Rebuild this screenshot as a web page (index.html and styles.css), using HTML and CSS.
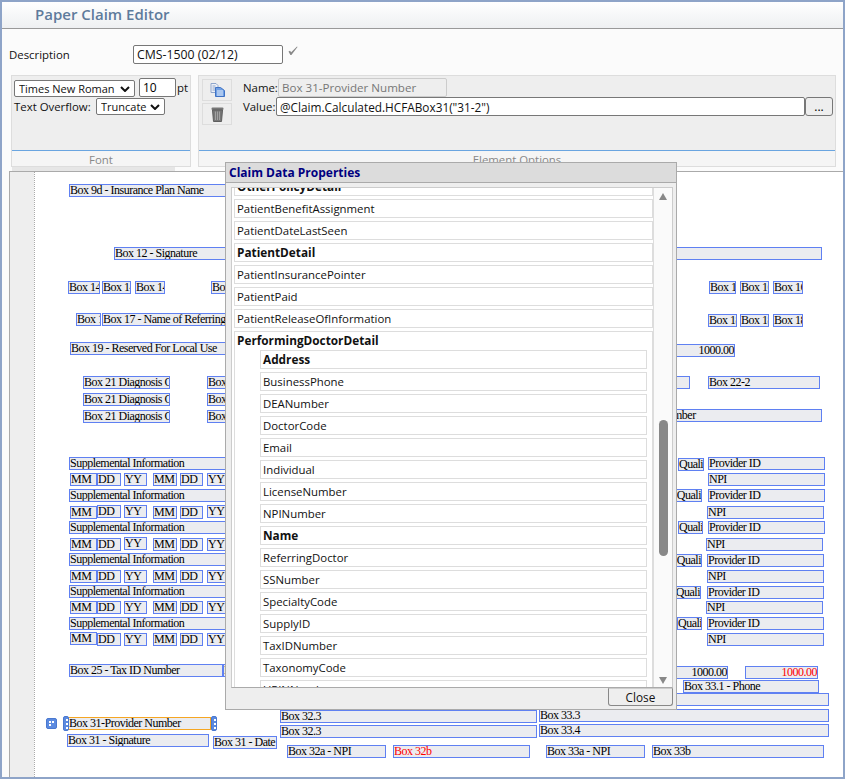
FILE: index.html
```html
<!DOCTYPE html>
<html lang="en">
<head>
	<meta charset="UTF-8">
	<title>Paper Claim Editor</title>
	<link rel="stylesheet" href="styles.css">
</head>
<body>
	<div class="window">
		<div class="head">Paper Claim Editor</div>
		<div class="desc-row">
			<label class="desc-label">Description</label>
			<input class="desc-input" type="text" value="CMS-1500 (02/12)">
			<svg class="check" width="10" height="10" viewBox="0 0 10 10"><path d="M0.5 5.5 L2 4.8 L3.2 6.3 L9 0.5 L9.5 1 L3.4 9 L2.4 9 Z" fill="#888"/></svg>
		</div>
		<div class="ribbon">
			<div class="group group-font">
				<div class="group-body">
					<div class="font-row">
						<select class="sel-font"><option>Times New Roman</option></select>
						<input class="size-input" type="text" value="10">
						<span class="pt">pt</span>
					</div>
					<div class="font-row font-row-2">
						<span class="over-label">Text Overflow:</span>
						<select class="sel-over"><option>Truncate</option></select>
					</div>
				</div>
				<div class="group-foot">Font</div>
			</div>
			<div class="group group-opts">
				<div class="group-body opts-body">
					<div class="tool-col">
						<button class="tool-btn">
							<svg width="15" height="14" viewBox="0 0 15 14">
								<path d="M1 0.5 H6 L8 2.5 V9.5 H1 Z" fill="#eef1f7" stroke="#8fa6cc"/>
								<path d="M2.5 3 H5.5 M2.5 5 H5.5 M2.5 7 H5.5" stroke="#8fa6cc"/>
								<path d="M5.5 4.5 H10.5 L14.5 7.5 V13.5 H5.5 Z" fill="#6f9fe4" stroke="#3f72c4"/>
								<path d="M7 8 H13 M7 10 H13 M7 12 H13" stroke="#e8f0fb"/>
							</svg>
						</button>
						<button class="tool-btn">
							<svg width="13" height="15" viewBox="0 0 13 15">
								<rect x="0.5" y="0.5" width="12" height="2.5" rx="1" fill="#777"/>
								<path d="M1.5 3 H11.5 L10.5 14.5 H2.5 Z" fill="#777" stroke="#5e5e5e"/>
								<path d="M4.5 4.5 V13 M6.5 4.5 V13 M8.5 4.5 V13" stroke="#a2a2a2"/>
							</svg>
						</button>
					</div>
					<div class="field-col">
						<div class="field-row">
							<span class="name-label">Name:</span>
							<input class="name-input" type="text" value="Box 31-Provider Number" disabled>
						</div>
						<div class="field-row">
							<span class="value-label">Value:</span>
							<input class="value-input" type="text" value='@Claim.Calculated.HCFABox31("31-2")'>
							<button class="more-btn">...</button>
						</div>
					</div>
				</div>
				<div class="group-foot">Element Options</div>
			</div>
		</div>
		<div class="ruler"></div>
		<div class="canvas" id="canvas"></div>
	</div>

	<div class="modal">
		<div class="modal-title">Claim Data Properties</div>
		<div class="modal-body">
			<div class="prop-view">
				<div class="prop-list">
					<div class="prop bold">OtherPolicyDetail</div>
					<div class="prop">PatientBenefitAssignment</div>
					<div class="prop">PatientDateLastSeen</div>
					<div class="prop bold">PatientDetail</div>
					<div class="prop">PatientInsurancePointer</div>
					<div class="prop">PatientPaid</div>
					<div class="prop">PatientReleaseOfInformation</div>
					<div class="prop-group">
						<div class="prop-group-name bold">PerformingDoctorDetail</div>
						<div class="prop bold">Address</div>
						<div class="prop">BusinessPhone</div>
						<div class="prop">DEANumber</div>
						<div class="prop">DoctorCode</div>
						<div class="prop">Email</div>
						<div class="prop">Individual</div>
						<div class="prop">LicenseNumber</div>
						<div class="prop">NPINumber</div>
						<div class="prop bold">Name</div>
						<div class="prop">ReferringDoctor</div>
						<div class="prop">SSNumber</div>
						<div class="prop">SpecialtyCode</div>
						<div class="prop">SupplyID</div>
						<div class="prop">TaxIDNumber</div>
						<div class="prop">TaxonomyCode</div>
						<div class="prop">UPINNumber</div>
					</div>
				</div>
			</div>
			<div class="scrollbar">
				<i class="arrow-up"></i>
				<b class="thumb"></b>
				<i class="arrow-down"></i>
			</div>
		</div>
		<div class="modal-foot"><button class="close-btn">Close</button></div>
	</div>

	<script>
		// left, top, right edge, text, extra class
		var boxes = [
			[69,184,300,"Box 9d - Insurance Plan Name"],
			[114,247,822,"Box 12 - Signature"],
			[68,281,100,"Box 14"],[102,281,131,"Box 14"],[135,281,165,"Box 14"],[211,281,300,"Box 15"],
			[709,281,736,"Box 16"],[740,281,769,"Box 16"],[773,281,803,"Box 16"],
			[76,313,101,"Box 17"],[102,313,300,"Box 17 - Name of Referring Provider"],
			[708,314,737,"Box 18"],[740,314,769,"Box 18"],[773,314,803,"Box 18"],
			[70,342,300,"Box 19 - Reserved For Local Use"],
			[600,344,735,"1000.00","num"],
			[83,376,170,"Box 21 Diagnosis Code"],[83,393,170,"Box 21 Diagnosis Code"],[83,410,170,"Box 21 Diagnosis Code"],
			[207,376,300,"Box 21"],[207,393,300,"Box 21"],[207,410,300,"Box 21"],
			[600,376,690,"Box 22-1"],[708,376,820,"Box 22-2"],
			[570,409,822,"Box 23 - Prior Auth Number"],
			[69,457,300,"Supplemental Information"],[69,489,300,"Supplemental Information"],[69,521,300,"Supplemental Information"],
			[69,553,300,"Supplemental Information"],[69,585,300,"Supplemental Information"],[69,617,300,"Supplemental Information"],
			[69,664,223,"Box 25 - Tax ID Number"],[223,664,300,"Box 26"],
			[600,666,728,"1000.00","num"],[745,666,818,"1000.00","num red"],
			[683,680,819,"Box 33.1 - Phone"],
			[600,693,829,"Box 33.2"],
			[280,710,537,"Box 32.3"],[280,725,537,"Box 32.3"],
			[539,709,829,"Box 33.3"],[539,724,829,"Box 33.4"],
			[67,734,209,"Box 31 - Signature"],[213,736,277,"Box 31 - Date"],
			[287,745,386,"Box 32a - NPI"],[393,745,530,"Box 32b","red"],
			[546,745,645,"Box 33a - NPI"],[652,745,824,"Box 33b"],
			// qualifier columns
			[678,458,704,"Quali"],[708,457,825,"Provider ID"],[708,473,825,"NPI"],
			[670,489,702,"Quali","right"],[708,489,825,"Provider ID"],[707,506,824,"NPI"],
			[678,521,703,"Quali"],[708,521,825,"Provider ID"],[706,538,823,"NPI"],
			[670,554,702,"Quali","right"],[707,554,824,"Provider ID"],[707,570,824,"NPI"],
			[670,586,701,"Quali","right"],[707,586,824,"Provider ID"],[706,601,823,"NPI"],
			[677,617,702,"Quali"],[707,617,824,"Provider ID"],[707,633,824,"NPI"],
			[68,717,211,"Box 31-Provider Number","picked"]
		];
		// top of each date cell in the six service lines
		var dates = [
			[473,473,473,473,473,473],
			[506,505,505,506,506,505],
			[538,538,537,538,538,538],
			[570,570,570,570,570,570],
			[601,601,601,601,601,601],
			[632,633,633,633,633,633]
		];
		var cols = [[70,97,"MM"],[97,121,"DD"],[124,147,"YY"],[153,177,"MM"],[180,203,"DD"],[207,232,"YY"]];
		dates.forEach(function(row){
			row.forEach(function(y, c){
				boxes.push([cols[c][0], y, cols[c][1], cols[c][2]]);
			});
		});

		var canvas = document.getElementById("canvas");
		var originX = 10, originY = 172;
		boxes.forEach(function(b){
			var el = document.createElement("div");
			el.className = "box " + (b[4] || "");
			el.textContent = b[3];
			el.style.left = (b[0] - originX) + "px";
			el.style.top = (b[1] - originY) + "px";
			el.style.width = (b[2] - b[0]) + "px";
			canvas.appendChild(el);
		});

		// drag handles round the picked box
		[[46,718,"grip-move"],[63,716,"grip"],[211,716,"grip"]].forEach(function(g){
			var el = document.createElement("span");
			el.className = g[2];
			el.style.left = (g[0] - originX) + "px";
			el.style.top = (g[1] - originY) + "px";
			canvas.appendChild(el);
		});
	</script>
</body>
</html>
```

FILE: styles.css
```css
* {
	box-sizing: border-box;
}
html, body {
	margin: 0;
	height: 100%;
}
body {
	font-family: "Open Sans", "Noto Sans", sans-serif;
	font-size: 11.4px;
	color: #111;
	background: #fff;
	overflow: hidden;
}
.window {
	width: 845px;
	height: 779px;
	border: 2px solid #8ea4c8;
	background: #fbfbfb;
	display: flex;
	flex-direction: column;
}
.head {
	height: 27px;
	flex: none;
	padding: 2px 0 0 33px;
	font-size: 15px;
	font-weight: 600;
	line-height: 20px;
	color: #5e7b9c;
	background: linear-gradient(#fff, #eef0f2);
	border-bottom: 1px solid #999;
}
.desc-row {
	display: flex;
	align-items: center;
	height: 46px;
	flex: none;
	padding: 5px 0 0 7px;
}
.desc-label {
	width: 124px;
}
.desc-input {
	width: 150px;
	height: 19px;
	padding: 0 3px;
	border: 1px solid #777;
	border-radius: 2px;
	font: 12.3px "Open Sans", sans-serif;
	color: #111;
}
.check {
	margin: -8px 0 0 5px;
}
.ribbon {
	display: flex;
	gap: 7px;
	height: 92px;
	flex: none;
	padding-left: 9px;
}
.group {
	display: flex;
	flex-direction: column;
	border: 1px solid #ddd;
	background: #eee;
}
.group-font {
	width: 180px;
}
.group-opts {
	width: 638px;
}
.group-body {
	flex: 1;
	padding: 2px;
}
.group-foot {
	height: 16px;
	flex: none;
	background: #f5f5f5;
	border-top: 1px solid #6aa5e0;
	text-align: center;
	color: #888;
	line-height: 17px;
}
.font-row {
	display: flex;
	align-items: center;
	gap: 4px;
	height: 19px;
}
.font-row-2 {
	height: 17px;
	margin-top: 1px;
}
.pt {
	margin-left: -3px;
}
.over-label {
	width: 80px;
	white-space: nowrap;
}
.sel-font, .sel-over {
	appearance: none;
	height: 17px;
	padding: 0 0 0 4px;
	border: 1px solid #777;
	border-radius: 2px;
	background: #fff url("data:image/svg+xml,%3Csvg xmlns='http://www.w3.org/2000/svg' width='10' height='6'%3E%3Cpath d='M1 1 L5 5 L9 1' fill='none' stroke='%23111' stroke-width='2'/%3E%3C/svg%3E") no-repeat right 4px center;
	font: 11px "Open Sans", sans-serif;
	color: #111;
}
.sel-font {
	width: 122px;
	margin-top: 2px;
}
.sel-over {
	width: 69px;
	margin-left: -2px;
}
.size-input {
	width: 37px;
	height: 19px;
	padding: 0 3px;
	border: 1px solid #777;
	border-radius: 2px;
	font: 12px "Open Sans", sans-serif;
}
.opts-body {
	display: flex;
	padding: 2px 2px 0 3px;
}
.tool-col {
	display: flex;
	flex-direction: column;
	gap: 2px;
	width: 41px;
	margin-top: 1px;
}
.tool-btn {
	width: 30px;
	height: 22px;
	padding: 0;
	display: flex;
	align-items: center;
	justify-content: center;
	background: #eee;
	border: 1px solid #ddd;
}
.field-row {
	display: flex;
	align-items: center;
	height: 19px;
}
.name-label {
	width: 34px;
}
.value-label {
	width: 32px;
}
.name-input {
	width: 169px;
	height: 19px;
	margin-left: 1px;
	padding: 0 3px;
	border: 1px solid #ccc;
	border-radius: 2px;
	background: #eee;
	color: #777;
	font: 11.6px "Open Sans", sans-serif;
}
.value-input {
	width: 529px;
	height: 19px;
	padding: 0 3px;
	margin-left: 1px;
	border: 1px solid #777;
	border-radius: 2px;
	font: 11.8px "Open Sans", sans-serif;
	color: #111;
}
.more-btn {
	width: 28px;
	height: 19px;
	padding: 0;
	background: #eee;
	border: 1px solid #777;
	border-radius: 3px;
	font: 12px "Open Sans", sans-serif;
}
.ruler {
	width: 163px;
	height: 4px;
	flex: none;
	margin-left: 10px;
	background: #e6e6e6;
}
.canvas {
	flex: 1;
	position: relative;
	margin-left: 7px;
	border-top: 1px solid #aaa;
	border-left: 1px solid #aaa;
	background: linear-gradient(90deg, #eee 24px, #fff 24px);
	overflow: hidden;
}
.canvas::before {
	content: "";
	position: absolute;
	left: 24px;
	top: 0;
	bottom: 0;
	border-left: 1px dotted #aaa;
}
.box {
	position: absolute;
	height: 13px;
	border: 1px solid #5f80f2;
	background: #ebecf0;
	font: 12px/11px "Liberation Serif", serif;
	letter-spacing: -0.5px;
	color: #000;
	white-space: nowrap;
	overflow: hidden;
}
.box.num, .box.right {
	text-align: right;
}
.box.red {
	color: #f00;
}
.box.picked {
	border-color: #f5a623;
}
.grip, .grip-move {
	position: absolute;
	background: #5b8ae0;
	border: 1px solid #4a78d0;
	border-radius: 2px;
}
.grip {
	width: 6px;
	height: 15px;
}
.grip::before {
	content: "";
	position: absolute;
	left: 2px;
	top: 2px;
	width: 2px;
	height: 2px;
	background: #fff;
	box-shadow: 0 4px #fff, 0 8px #fff;
}
.grip-move {
	width: 11px;
	height: 11px;
}
.grip-move::before {
	content: "";
	position: absolute;
	left: 2px;
	top: 2px;
	width: 2px;
	height: 2px;
	background: #fff;
	box-shadow: 3px 0 #fff, 0 3px #fff;
}
.modal {
	position: absolute;
	left: 225px;
	top: 162px;
	width: 452px;
	height: 548px;
	display: flex;
	flex-direction: column;
	border: 1px solid #aaa;
	background: #eee;
}
.modal-title {
	height: 20px;
	flex: none;
	padding-left: 3px;
	background: #dcdcdc;
	border-bottom: 1px solid #aaa;
	color: #000080;
	font-size: 12px;
	font-weight: 700;
	line-height: 19px;
}
.modal-body {
	flex: 1;
	min-height: 0;
	display: flex;
	margin: 4px 3px 0 5px;
	border: 1px solid #ccc;
	border-bottom-color: #aaa;
	background: #fff;
}
.prop-view {
	flex: 1;
	overflow: hidden;
	padding: 0 0 0 2px;
}
.prop-list {
	margin-top: -11px;
}
.prop {
	height: 19px;
	margin-bottom: 3px;
	padding-left: 2px;
	border: 1px solid #ddd;
	line-height: 17px;
	white-space: nowrap;
}
.bold {
	font-size: 11.8px;
	font-weight: 700;
}
.prop-group {
	padding: 0 5px 0 25px;
	border: 1px solid #ddd;
	border-bottom: 0;
}
.prop-group-name {
	height: 18px;
	margin-left: -23px;
	line-height: 17px;
}
.scrollbar {
	width: 19px;
	flex: none;
	position: relative;
	background: #fafafa;
	border-left: 1px solid #ddd;
}
.thumb {
	position: absolute;
	left: 5px;
	top: 232px;
	width: 9px;
	height: 136px;
	background: #888;
	border-radius: 5px;
}
.arrow-up, .arrow-down {
	position: absolute;
	left: 5px;
	width: 0;
	height: 0;
	border-left: 4.5px solid transparent;
	border-right: 4.5px solid transparent;
}
.arrow-up {
	top: 5px;
	border-bottom: 7px solid #888;
}
.arrow-down {
	bottom: 3px;
	border-top: 7px solid #888;
}
.modal-foot {
	height: 21px;
	flex: none;
	display: flex;
	justify-content: flex-end;
	padding-right: 3px;
}
.close-btn {
	width: 65px;
	height: 18px;
	padding: 0;
	background: #eee;
	border: 1px solid #888;
	border-top-color: #ccc;
	border-radius: 0 0 3px 3px;
	font: 11.8px/14px "Open Sans", sans-serif;
	color: #111;
}
```
